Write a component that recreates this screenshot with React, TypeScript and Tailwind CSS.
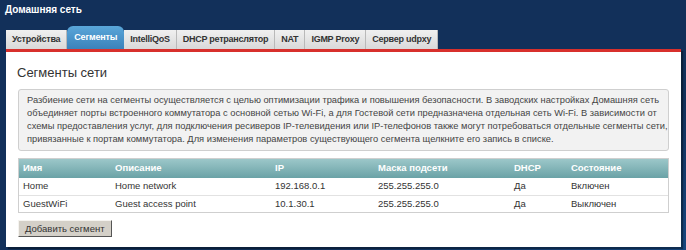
const tabs = ["Устройства", "Сегменты", "IntelliQoS", "DHCP ретранслятор", "NAT", "IGMP Proxy", "Сервер udpxy"];

const rows = [
  { name: "Home", desc: "Home network", ip: "192.168.0.1", mask: "255.255.255.0", dhcp: "Да", state: "Включен" },
  { name: "GuestWiFi", desc: "Guest access point", ip: "10.1.30.1", mask: "255.255.255.0", dhcp: "Да", state: "Выключен" },
];

export default function App() {
  return (
    <div
      className="h-[250px] w-[686px] overflow-hidden bg-[linear-gradient(160deg,#12305a_70%,#17467e_100%)] text-[9.5px] text-[#333]"
      style={{ fontFamily: '"Liberation Sans", Arial, sans-serif' }}
    >
      <div className="px-[5px] pt-[3px] text-[10px] font-bold leading-[13px] text-white">Домашняя сеть</div>

      <div className="ml-[6px] mt-[10px] flex h-[23px] items-end">
        {tabs.map((t) =>
          t === "Сегменты" ? (
            <div
              key={t}
              className="flex h-[23px] items-center rounded-t-[6px] bg-[linear-gradient(#5aa6d9,#3b82bb)] px-[7px] text-[9px] font-bold tracking-[-0.2px] text-white"
            >
              {t}
            </div>
          ) : (
            <div
              key={t}
              className="flex h-[19px] items-center border-r border-[#b9b9b9] bg-[linear-gradient(#f0f0f0,#d9d9d9)] px-[6px] text-[9px] font-bold tracking-[-0.25px] text-[#333]"
            >
              {t}
            </div>
          )
        )}
      </div>

      <div className="ml-[6px] w-[675px] border-t-[3px] border-[#d8302c] bg-white pb-[10px] shadow-[2px_2px_1px_rgba(0,0,0,0.35)]">
        <div className="px-[11px] pt-[13px] text-[13px] leading-[16px] text-[#333]">Сегменты сети</div>

        <div className="mx-[12px] mt-[8px] whitespace-nowrap rounded-[3px] border border-[#cfcfcf] bg-[#f2f2f2] px-[8px] py-[4px] text-[9.3px] leading-[13px] text-[#444]">
          Разбиение сети на сегменты осуществляется с целью оптимизации трафика и повышения безопасности. В заводских настройках Домашняя сеть
          <br />
          объединяет порты встроенного коммутатора с основной сетью Wi-Fi, а для Гостевой сети предназначена отдельная сеть Wi-Fi. В зависимости от
          <br />
          схемы предоставления услуг, для подключения ресиверов IP-телевидения или IP-телефонов также могут потребоваться отдельные сегменты сети,
          <br />
          привязанные к портам коммутатора. Для изменения параметров существующего сегмента щелкните его запись в списке.
        </div>

        <div className="mx-[12px] mt-[7px] border border-[#cfcfcf]">
          <div className="grid h-[19px] grid-cols-[92px_160px_103px_136px_57px_1fr] items-center bg-[linear-gradient(#9cc7c9,#6aa2a6)] px-[4px] font-bold text-white">
            <div>Имя</div>
            <div>Описание</div>
            <div>IP</div>
            <div>Маска подсети</div>
            <div>DHCP</div>
            <div>Состояние</div>
          </div>
          {rows.map((r, i) => (
            <div
              key={r.name}
              className={`grid h-[17px] grid-cols-[92px_160px_103px_136px_57px_1fr] items-center px-[4px] text-[#333] ${i > 0 ? "border-t border-[#e2e2e2]" : ""}`}
            >
              <div>{r.name}</div>
              <div>{r.desc}</div>
              <div>{r.ip}</div>
              <div>{r.mask}</div>
              <div>{r.dhcp}</div>
              <div>{r.state}</div>
            </div>
          ))}
        </div>

        <button className="ml-[12px] mt-[7px] h-[17px] border border-[#f5f3ef] border-r-[#555] border-b-[#555] bg-[#d4d0c8] px-[6px] text-[9.5px] leading-[13px] text-[#333]">
          Добавить сегмент
        </button>
      </div>
    </div>
  );
}
